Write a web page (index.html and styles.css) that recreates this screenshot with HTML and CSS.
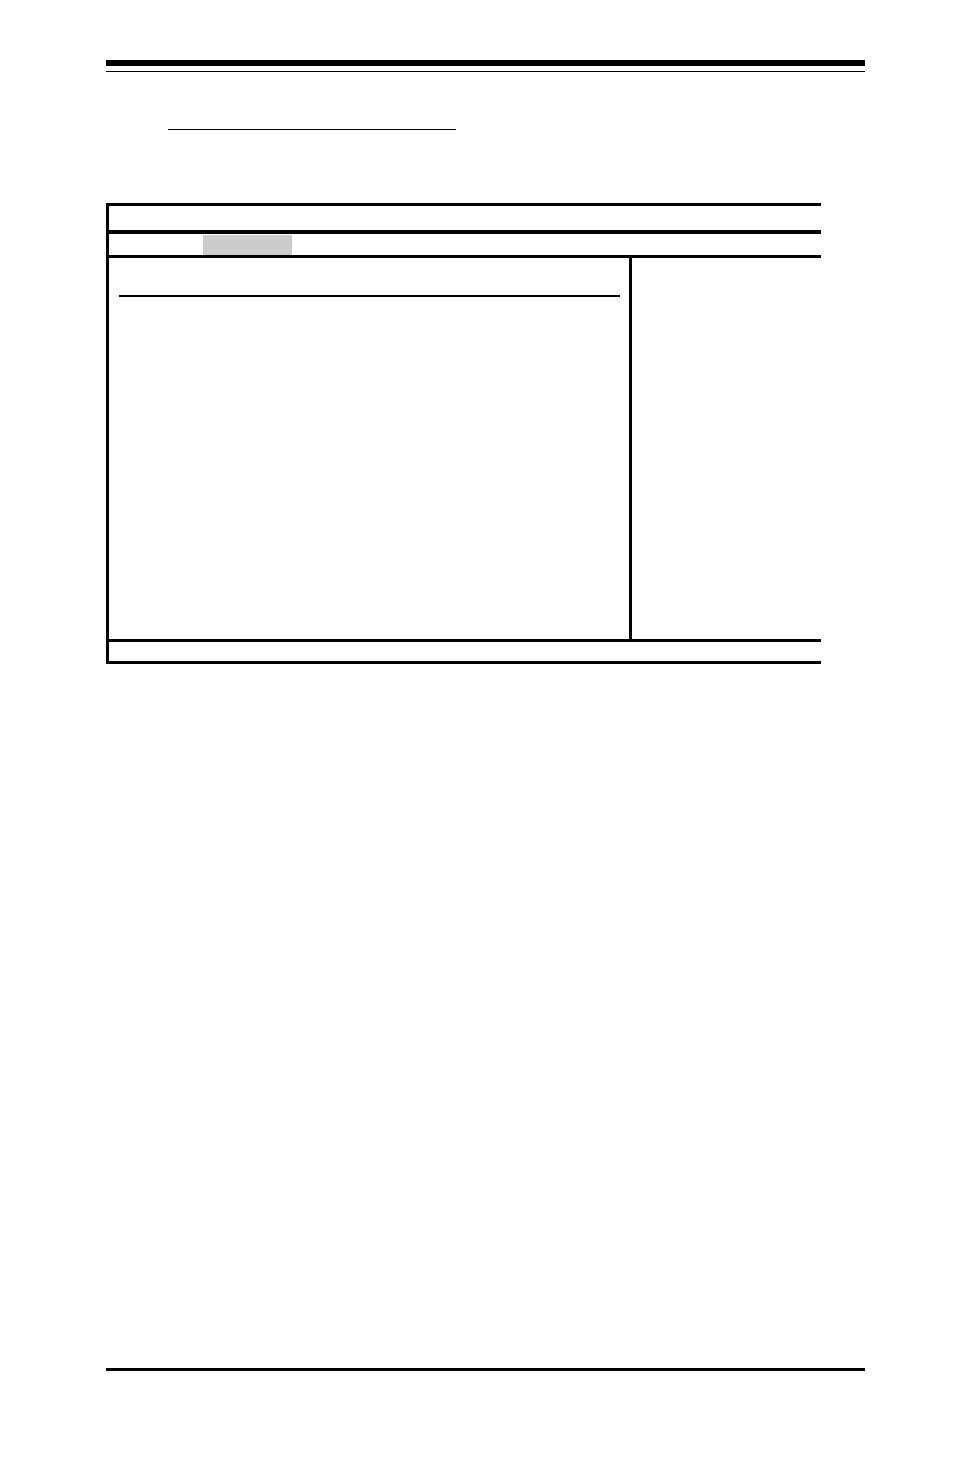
FILE: index.html
```html
<!DOCTYPE html>
<html lang="en">
<head>
  <meta charset="UTF-8">
  <meta name="viewport" content="width=device-width, initial-scale=1">
  <title>Setup</title>
  <link rel="stylesheet" href="styles.css">
</head>

<body>
<div class="page">
  <header class="page-header"></header>

  <main>
    <div class="heading"></div>

    <div class="setup">
      <div class="title-bar"></div>
      <div class="menu-bar">
        <div class="tab active"></div>
      </div>
      <div class="screen">
        <div class="settings">
          <div class="settings-title"></div>
        </div>
        <div class="help"></div>
      </div>
      <div class="status-bar"></div>
    </div>
  </main>

  <footer class="page-footer"></footer>
</div>
</body>

</html>
```

FILE: styles.css
```css
* {
  box-sizing: border-box;
}

body {
  margin: 0;
  background-color: #fff;
  font-family: "Liberation Sans", Arial, sans-serif;
}

.page {
  display: flex;
  flex-direction: column;
  min-height: 100vh;
  padding: 60px 89px 86px 106px;
}

/* thick rule with a hairline under it */
.page-header {
  height: 12px;
  border-top: 6px solid #000;
  border-bottom: 1px solid #000;
}

.page-footer {
  margin-top: auto;
  border-top: 3px solid #000;
}

.heading {
  width: 288px;
  height: 58px;
  margin-left: 62px;
  border-bottom: 1px solid #000;
}

/* setup screen, open on the right side */
.setup {
  margin-top: 73px;
  margin-right: 44px;
  border: 3px solid #000;
  border-right: 0;
}

.title-bar {
  height: 28px;
  border-bottom: 4px solid #000;
}

.menu-bar {
  display: flex;
  height: 24px;
  padding: 1px 0 0 94px;
  border-bottom: 3px solid #000;
}

.tab {
  width: 89px;
}
.tab.active {
  background-color: #ccc;
}

.screen {
  display: flex;
  min-height: 384px;
  border-bottom: 3px solid #000;
}

.settings {
  flex: 1;
  padding: 0 9px 0 10px;
}

.settings-title {
  height: 39px;
  border-bottom: 2px solid #000;
}

.help {
  width: 192px;
  border-left: 3px solid #000;
}

.status-bar {
  height: 19px;
}
```
